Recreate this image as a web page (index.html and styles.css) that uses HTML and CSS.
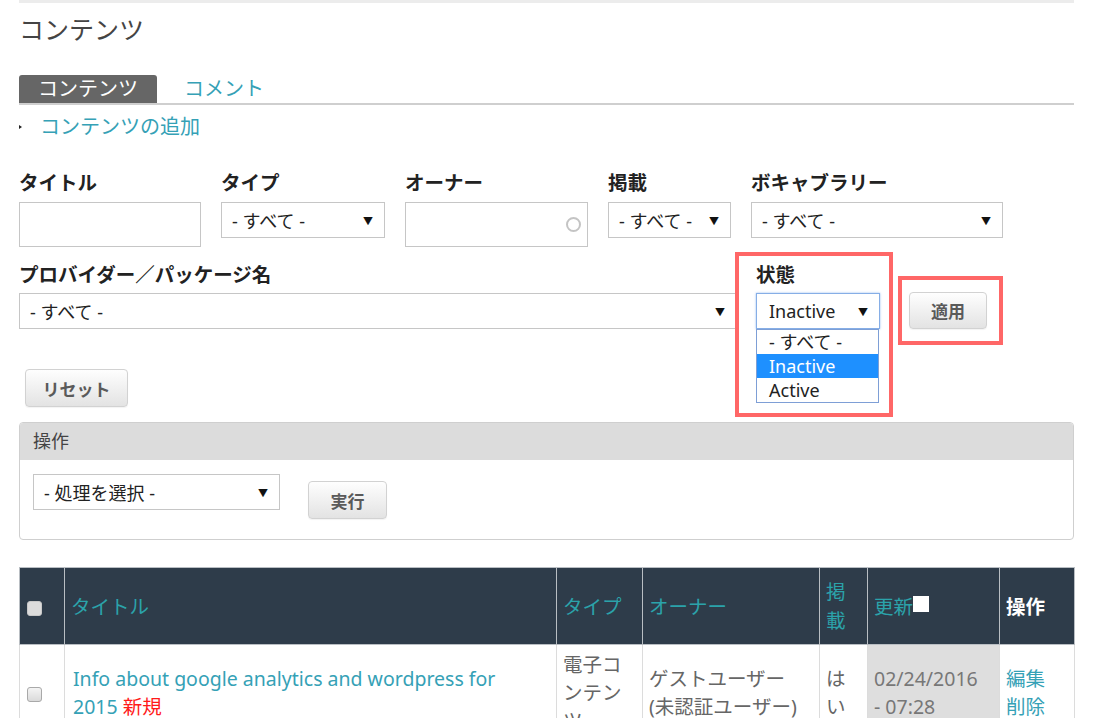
FILE: index.html
```html
<!DOCTYPE html>
<html lang="ja">
<head>
<meta charset="utf-8">
<title>コンテンツ</title>
<link rel="stylesheet" href="styles.css">
</head>
<body>
<div class="page">
  <div class="topline"></div>
  <h1 class="page-title">コンテンツ</h1>

  <ul class="tabs">
    <li class="tab tab-active">コンテンツ</li>
    <li class="tab"><a href="#">コメント</a></li>
  </ul>

  <ul class="actions">
    <li><a href="#">コンテンツの追加</a></li>
  </ul>

  <form class="filters">
    <div class="filter-row row-1">
      <div class="field f-title">
        <label>タイトル</label>
        <div class="textbox"></div>
      </div>
      <div class="field f-type">
        <label>タイプ</label>
        <div class="select">- すべて -</div>
      </div>
      <div class="field f-owner">
        <label>オーナー</label>
        <div class="textbox autocomplete"><span class="throbber"></span></div>
      </div>
      <div class="field f-status">
        <label>掲載</label>
        <div class="select">- すべて -</div>
      </div>
      <div class="field f-vocab">
        <label>ボキャブラリー</label>
        <div class="select">- すべて -</div>
      </div>
    </div>

    <div class="filter-row row-2">
      <div class="field f-provider">
        <label>プロバイダー／パッケージ名</label>
        <div class="select">- すべて -</div>
      </div>
      <div class="field f-state marked">
        <label>状態</label>
        <div class="select select-focus">Inactive</div>
        <ul class="dropdown">
          <li>- すべて -</li>
          <li class="opt-selected">Inactive</li>
          <li>Active</li>
        </ul>
      </div>
      <div class="apply marked-btn">
        <button type="button" class="btn btn-apply">適用</button>
      </div>
    </div>

    <button type="button" class="btn btn-reset">リセット</button>
  </form>

  <div class="ops">
    <div class="ops-head">操作</div>
    <div class="ops-body">
      <div class="select select-op">- 処理を選択 -</div>
      <button type="button" class="btn btn-run">実行</button>
    </div>
  </div>

  <table class="list">
    <colgroup>
      <col class="c-cb"><col class="c-title"><col class="c-type"><col class="c-owner"><col class="c-pub"><col class="c-upd"><col class="c-op">
    </colgroup>
    <thead>
      <tr>
        <th><span class="cb cb-head"></span></th>
        <th><a href="#">タイトル</a></th>
        <th><a href="#">タイプ</a></th>
        <th><a href="#">オーナー</a></th>
        <th><a href="#">掲載</a></th>
        <th><a href="#">更新</a><span class="sort-icon"></span></th>
        <th class="th-plain">操作</th>
      </tr>
    </thead>
    <tbody>
      <tr>
        <td><span class="cb"></span></td>
        <td><a href="#">Info about google analytics and wordpress for 2015</a> <span class="new">新規</span></td>
        <td>電子コンテンツ</td>
        <td>ゲストユーザー (未認証ユーザー)</td>
        <td>はい</td>
        <td class="td-active"><span class="date">02/24/2016</span> - 07:28</td>
        <td><a class="op-link" href="#">編集</a><a class="op-link" href="#">削除</a></td>
      </tr>
    </tbody>
  </table>
</div>
</body>
</html>
```

FILE: styles.css
```css
html, body {
  margin: 0;
  padding: 0;
  background: #fff;
}

body {
  font-family: "Noto Sans", "Noto Sans CJK JP", sans-serif;
  font-size: 19.5px;
  color: #333;
}

a {
  color: #35a1b6;
  text-decoration: none;
}

.page {
  width: 1055px;
  margin-left: 19px;
}

.topline {
  height: 3px;
  background: #ececec;
}

.page-title {
  margin: 9px 0 0;
  font-size: 25px;
  line-height: 34px;
  font-weight: normal;
  color: #444;
}

/* tabs */
.tabs {
  list-style: none;
  margin: 29px 0 0;
  padding: 0;
  display: flex;
  border-bottom: 2px solid #cfcfcf;
}

.tab {
  font-size: 20px;
  line-height: 28px;
  height: 28px;
  padding: 0 19px 0 27px;
}

.tab-active {
  background: #666;
  color: #fff;
  padding: 0 19px;
  border-radius: 3px 3px 0 0;
}

/* action links */
.actions {
  list-style: none;
  margin: 8px 0 0;
  padding: 0;
}

.actions li {
  position: relative;
  padding-left: 21px;
  font-size: 20px;
  line-height: 28px;
}

.actions li::before {
  content: "";
  position: absolute;
  left: 0;
  top: 12px;
  border-left: 3px solid #222;
  border-top: 2.5px solid transparent;
  border-bottom: 2.5px solid transparent;
}

/* filters */
.filters {
  margin-top: 30px;
}

.filter-row {
  display: flex;
  align-items: flex-start;
}

.row-1 {
  gap: 20px;
}

.row-2 {
  margin-top: 16px;
  gap: 19px;
}

.field label {
  display: block;
  font-weight: bold;
  font-size: 19.5px;
  line-height: 24px;
  color: #222;
  margin-bottom: 7px;
  white-space: nowrap;
}

.row-2 .field label {
  margin-bottom: 6px;
}

.textbox {
  box-sizing: border-box;
  height: 45px;
  margin-top: 3px;
  border: 1px solid #c6c6c6;
  background: #fff;
  position: relative;
}

.throbber {
  position: absolute;
  right: 6px;
  top: 14px;
  width: 11px;
  height: 11px;
  border: 2px solid #c4c4c4;
  border-radius: 50%;
}

.select {
  box-sizing: border-box;
  height: 36px;
  border: 1px solid #c6c6c6;
  background: #fff;
  display: flex;
  align-items: center;
  justify-content: space-between;
  padding: 0 11px 0 10px;
  font-size: 18px;
  color: #222;
  white-space: nowrap;
}

.select::after {
  content: "▼";
  font-size: 10px;
  color: #111;
}

.f-title { width: 182px; }
.f-type { width: 164px; }
.f-owner { width: 183px; }
.f-status { width: 123px; }
.f-vocab { width: 252px; }
.f-provider { width: 718px; }
.f-state { width: 124px; }

.select-focus {
  border-color: #86aee6;
  box-shadow: 0 0 2px rgba(80, 140, 230, 0.6);
  padding-left: 12px;
}

/* annotation box */
.marked {
  position: relative;
}

.marked::before {
  content: "";
  position: absolute;
  left: -21px;
  top: -11px;
  right: -13px;
  bottom: -88px;
  border: 4px solid #ff6767;
}

.dropdown {
  position: absolute;
  left: 0;
  top: 66px;
  width: 123px;
  box-sizing: border-box;
  margin: 0;
  padding: 0;
  list-style: none;
  border: 1px solid #7e9fd6;
  background: #fff;
}

.dropdown li {
  height: 24px;
  line-height: 24px;
  padding-left: 12px;
  font-size: 18px;
  color: #222;
}

.dropdown .opt-selected {
  background: #1e90ff;
  color: #fff;
}

.apply {
  position: relative;
  margin-top: 29px;
  margin-left: 10px;
}

.marked-btn::before {
  content: "";
  position: absolute;
  left: -11px;
  top: -16px;
  right: -16px;
  bottom: -16px;
  border: 4px solid #ff6767;
}

/* buttons */
.btn {
  box-sizing: border-box;
  display: block;
  height: 38px;
  border: 1px solid #d2d2d2;
  border-radius: 4px;
  background: linear-gradient(#fefefe, #e3e3e3);
  box-shadow: 0 1px 1px rgba(0, 0, 0, 0.05);
  font-family: "Noto Sans CJK JP", "Noto Sans", sans-serif;
  font-size: 17px;
  font-weight: bold;
  color: #5a5a5a;
  padding: 0;
}

.btn-apply {
  width: 78px;
  height: 37px;
}

.btn-reset {
  width: 103px;
  margin: 40px 0 0 6px;
}

/* operations */
.ops {
  margin-top: 15px;
  border: 1px solid #cfcfcf;
  border-radius: 4px;
  height: 118px;
  box-sizing: border-box;
  overflow: hidden;
}

.ops-head {
  background: #dcdcdc;
  height: 37px;
  line-height: 37px;
  padding-left: 13px;
  font-size: 18px;
  color: #444;
}

.ops-body {
  display: flex;
  align-items: flex-start;
  gap: 28px;
  padding: 14px 13px 0;
}

.select-op {
  width: 247px;
}

.btn-run {
  width: 79px;
  margin-top: 7px;
}

/* table */
.list {
  margin-top: 27px;
  width: 1055px;
  table-layout: fixed;
  border-collapse: collapse;
  border: 1px solid #d0d0d0;
}

.c-cb { width: 45px; }
.c-title { width: 492px; }
.c-type { width: 86px; }
.c-owner { width: 177px; }
.c-pub { width: 48px; }
.c-upd { width: 132px; }
.c-op { width: 75px; }

.list th {
  background: #2e3c4a;
  border: 1px solid #b9bec3;
  text-align: left;
  font-weight: normal;
  padding: 9px 6px;
  line-height: 29px;
  height: 58px;
  vertical-align: middle;
}

.list th a {
  color: #2ba3aa;
}

.list th.th-plain {
  color: #fff;
  font-weight: bold;
}

.list td {
  border: 1px solid #dcdcdc;
  padding: 6px;
  line-height: 28px;
  vertical-align: middle;
  color: #666;
}

.list td:nth-child(2) {
  padding-left: 8px;
  padding-right: 20px;
}

.list td a {
  color: #35a1b6;
}

.td-active {
  background: #dedede;
}

.list td.td-active {
  color: #777;
}

.date {
  display: block;
}

.new {
  color: #ff1a1a;
}

.op-link {
  display: block;
}

.cb {
  display: inline-block;
  width: 13px;
  height: 13px;
  border: 1px solid #a9a9a9;
  border-radius: 3px;
  background: linear-gradient(#f4f4f4, #dadada);
  vertical-align: middle;
  margin-left: 1px;
}

.cb-head {
  background: #dcdcdc;
  border-color: #c8c8c8;
}

.sort-icon {
  display: inline-block;
  width: 16px;
  height: 16px;
  background: #fff;
  vertical-align: 2px;
}
```
